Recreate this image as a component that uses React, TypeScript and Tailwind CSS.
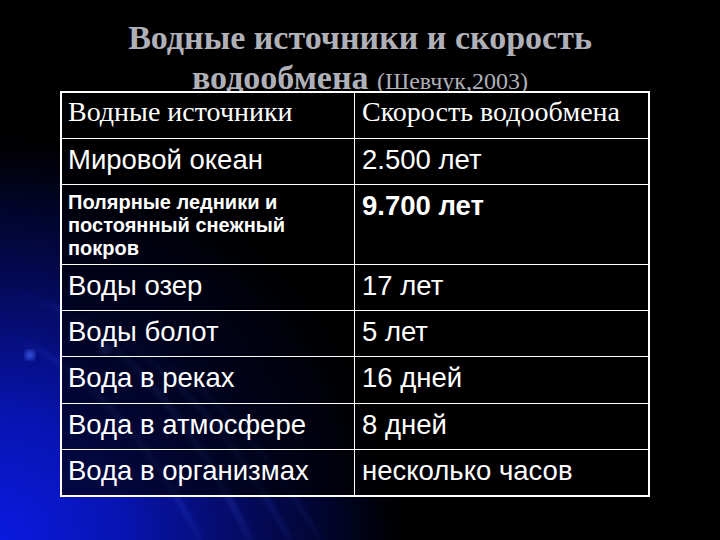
import React from 'react';

const rows: { name: string; value: string; h: string; small?: boolean; bold?: boolean }[] = [
  { name: 'Мировой океан', value: '2.500 лет', h: 'h-[46px]' },
  { name: 'Полярные ледники и постоянный снежный покров', value: '9.700 лет', h: 'h-[80px]', small: true, bold: true },
  { name: 'Воды озер', value: '17 лет', h: 'h-[46px]' },
  { name: 'Воды болот', value: '5 лет', h: 'h-[46px]' },
  { name: 'Вода в реках', value: '16 дней', h: 'h-[47px]' },
  { name: 'Вода в атмосфере', value: '8 дней', h: 'h-[46px]' },
  { name: 'Вода в организмах', value: 'несколько часов', h: 'h-[46px]' },
];

function Backdrop() {
  return (
    <svg className="absolute inset-0" width="720" height="540" viewBox="0 0 720 540">
      <defs>
        <radialGradient id="glow" cx="0" cy="540" r="420" gradientUnits="userSpaceOnUse">
          <stop offset="0" stopColor="#0a1ae0" />
          <stop offset="0.3" stopColor="#0814b0" />
          <stop offset="0.6" stopColor="#040a5a" />
          <stop offset="0.85" stopColor="#01031a" />
          <stop offset="1" stopColor="#000000" stopOpacity="0" />
        </radialGradient>
        <linearGradient id="arc" x1="0" y1="0" x2="0" y2="1">
          <stop offset="0" stopColor="#3a5cff" stopOpacity="0" />
          <stop offset="0.4" stopColor="#3a5cff" stopOpacity="0.55" />
          <stop offset="1" stopColor="#3a5cff" stopOpacity="0.15" />
        </linearGradient>
        <filter id="blur">
          <feGaussianBlur stdDeviation="2.5" />
        </filter>
      </defs>
      <rect width="720" height="540" fill="url(#glow)" />
      <g fill="none" stroke="url(#arc)" filter="url(#blur)">
        <path d="M10 290 Q150 330 250 540" strokeWidth="5" />
        <path d="M40 300 Q190 350 290 540" strokeWidth="3" />
        <path d="M0 330 Q120 380 200 540" strokeWidth="4" />
        <path d="M80 310 Q230 380 320 540" strokeWidth="2" />
      </g>
      <circle cx="30" cy="355" r="5" fill="#4a6cff" opacity="0.7" filter="url(#blur)" />
      <circle cx="105" cy="349" r="6" fill="#4a6cff" opacity="0.6" filter="url(#blur)" />
    </svg>
  );
}

export default function App() {
  return (
    <div className="relative w-[720px] h-[540px] overflow-hidden bg-black">
      <Backdrop />
      <div className="relative">
        <h1 className="pt-[18px] text-center text-[34px] leading-[40px] font-bold text-[#b0b0b8] font-['Liberation_Serif',serif]">
          Водные источники и скорость
          <br />
          водообмена <span className="text-[24px] font-normal">(Шевчук,2003)</span>
        </h1>

        <div className="relative mt-[-10px] ml-[60px] w-[590px] border-2 border-white text-white">
          <div className="grid grid-cols-[293px_1fr] h-[45px] bg-black font-['Liberation_Serif',serif] text-[28px] leading-[31px]">
            <div className="border-r border-white pl-[6px] pt-[3px]">Водные источники</div>
            <div className="pl-[7px] pt-[3px]">Скорость водообмена</div>
          </div>
          {rows.map((r) => (
            <div
              key={r.name}
              className={`grid grid-cols-[293px_1fr] border-t border-white bg-black/65 font-['Liberation_Sans',Arial,sans-serif] ${r.h}`}
            >
              {r.small ? (
                <div className="border-r border-white pl-[6px] pt-[6px] pr-2 text-[20px] leading-[23px] font-bold">
                  {r.name}
                </div>
              ) : (
                <div className="border-r border-white pl-[6px] pt-[5px] text-[27.5px] leading-[31px]">{r.name}</div>
              )}
              <div className={`pl-[7px] pt-[5px] text-[27.5px] leading-[31px] ${r.bold ? 'font-bold' : ''}`}>
                {r.value}
              </div>
            </div>
          ))}
        </div>
      </div>
    </div>
  );
}
